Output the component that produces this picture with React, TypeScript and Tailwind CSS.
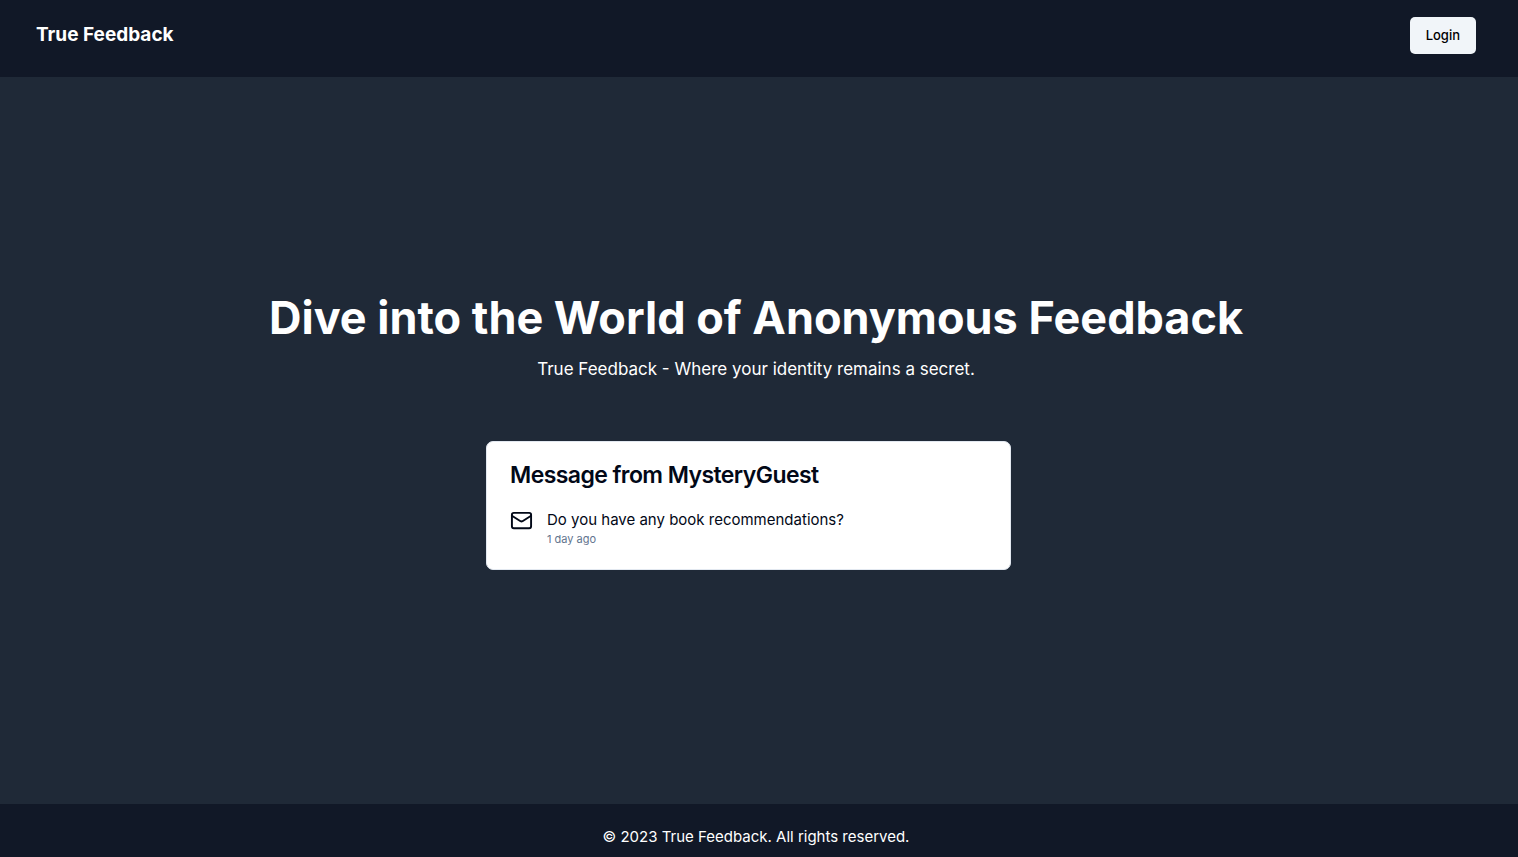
import { Mail } from "lucide-react";

export default function App() {
  return (
    <div className="flex min-h-screen flex-col bg-[#1f2937] font-['Inter',sans-serif] text-white">
      <nav className="bg-[#111827] pt-[17px] pr-[42px] pb-[23px] pl-9">
        <div className="flex items-start justify-between">
          <a href="#" className="text-[19px] leading-9 font-bold">True Feedback</a>
          <button type="button" className="h-[37px] rounded-[5px] bg-slate-100 px-4 text-[13px] font-medium text-black">
            Login
          </button>
        </div>
      </nav>
      <main className="flex grow flex-col items-center justify-center pr-1.5 pb-4">
        <section className="mb-[60px] text-center">
          <h1 className="text-[45px] leading-[46px] font-bold">Dive into the World of Anonymous Feedback</h1>
          <p className="mt-4 text-[17px] leading-6">True Feedback - Where your identity remains a secret.</p>
        </section>
        <div className="flex w-full justify-center pr-[15px]">
          <article className="w-full max-w-[525px] rounded-[7px] border border-slate-200 bg-white text-[#020817]">
            <h2 className="px-[23px] pt-[22px] text-[23px] leading-[23px] font-semibold tracking-tight">
              Message from MysteryGuest
            </h2>
            <div className="flex items-start gap-3.5 px-[23px] py-[22px]">
              <Mail className="size-[23px] shrink-0" />
              <div>
                <p className="text-[15px] leading-[22px]">Do you have any book recommendations?</p>
                <p className="text-[11px] leading-4 text-slate-500">1 day ago</p>
              </div>
            </div>
          </article>
        </div>
      </main>
      <footer className="bg-[#111827] pt-[21px] pr-1.5 pb-[9px] text-center text-[15px] leading-[23px]">
        © 2023 True Feedback. All rights reserved.
      </footer>
    </div>
  );
}
